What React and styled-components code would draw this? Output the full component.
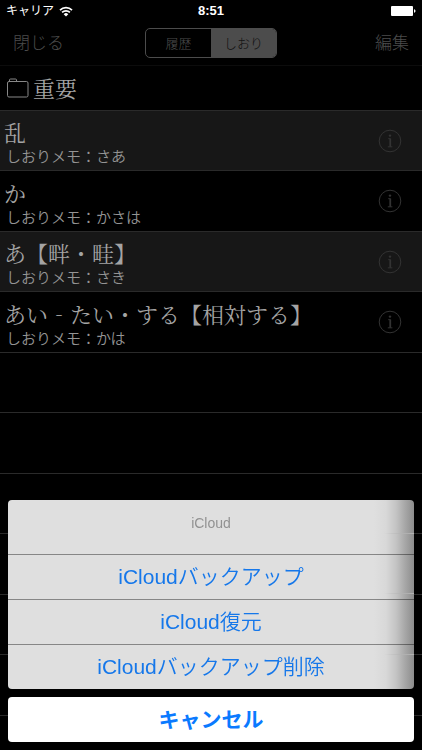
import React, {useState} from 'react'
import styled, {createGlobalStyle} from 'styled-components'

const bookmarks = [
  {title: '乱', memo: 'さあ'},
  {title: 'か', memo: 'かさは'},
  {title: 'あ【畔・畦】', memo: 'さき'},
  {title: 'あい‐たい・する【相対する】', memo: 'かは'},
]
const EMPTY_ROWS = 7

const GlobalStyle = createGlobalStyle`
  * {
    box-sizing: border-box;
  }
  body {
    margin: 0;
    background: #000;
    font-family: 'Liberation Sans', 'Noto Sans CJK JP', sans-serif;
  }
  button {
    margin: 0;
    padding: 0;
    border: 0;
    background: none;
    color: inherit;
    font: inherit;
    cursor: pointer;
  }
`

const Screen = styled.div`
  height: 100vh;
  overflow: hidden;
  background: #000;
`

const StatusBar = styled.div`
  display: grid;
  grid-template-columns: 1fr auto 1fr;
  align-items: center;
  height: 22px;
  padding: 0 6px;
  color: #fff;
  font-size: 12px;
  line-height: 22px;
`
const Carrier = styled.div`
  display: flex;
  align-items: center;
  gap: 5px;
`
const Clock = styled.time`
  font-size: 13px;
  font-weight: bold;
`
const Battery = styled.svg`
  justify-self: end;
`

const NavBar = styled.nav`
  display: grid;
  grid-template-columns: 1fr auto 1fr;
  align-items: center;
  height: 44px;
  padding: 0 13px;
  border-bottom: 1px solid #0c0c0c;
  color: #4c4c4c;
`
const NavButton = styled.button`
  justify-self: ${props => (props.$right ? 'end' : 'start')};
  font-size: 17px;
  font-weight: 300;
  line-height: 24px;
`
const Segments = styled.div`
  display: flex;
  overflow: hidden;
  margin-bottom: 2px;
  border: 1px solid #4c4c4c;
  border-radius: 5px;
`
const Segment = styled.button`
  width: 65px;
  height: 28px;
  font-size: 13px;
  font-weight: 300;
  background: ${props => (props.$active ? '#4c4c4c' : 'transparent')};
  color: ${props => (props.$active ? '#111' : '#4c4c4c')};
`

const Heading = styled.h1`
  display: flex;
  align-items: center;
  gap: 4px;
  height: 45px;
  margin: 0;
  padding: 0 7px;
  border-bottom: 1px solid #2a2a2a;
  color: #a4a4a4;
  font-family: 'Noto Serif CJK JP', 'Noto Sans CJK JP', serif;
  font-size: 22px;
  font-weight: 400;
  line-height: 30px;
`

const List = styled.ul`
  margin: 0;
  padding: 0;
  list-style: none;
`
const Row = styled.li`
  display: flex;
  align-items: center;
  justify-content: space-between;
  height: 60px;
  padding: 0 20px 0 4px;
  border-bottom: 1px solid #2a2a2a;
  background: ${props => (props.$shaded ? '#171717' : '#000')};

  &:nth-child(even) {
    height: 61px;
  }
`
const Entry = styled.div`
  padding-top: 3px;
`
const Title = styled.div`
  color: #a4a4a4;
  font-family: 'Noto Serif CJK JP', 'Noto Sans CJK JP', serif;
  font-size: 22px;
  font-weight: 400;
  line-height: 28px;
  white-space: nowrap;
`
const Memo = styled.div`
  padding-left: 2px;
  color: #949494;
  font-family: 'Noto Sans CJK JP', sans-serif;
  font-size: 15px;
  font-weight: 350;
  line-height: 20px;
`
const InfoButton = styled.button`
  display: flex;
  color: #333;
`

const ActionSheet = styled.div`
  position: fixed;
  right: 8px;
  bottom: 8px;
  left: 8px;
  display: flex;
  flex-direction: column;
  gap: 8px;
`
const Actions = styled.div`
  position: relative;
  overflow: hidden;
  border-radius: 4px;
  background: linear-gradient(
    to left,
    #8c8c8c 0,
    #a4a4a4 8px,
    #c4c4c4 18px,
    #d8d8d8 28px,
    #dfdfdf 40px
  );

  /* list lines showing through the translucent edge */
  &::after {
    content: '';
    position: absolute;
    top: 33px;
    right: 0;
    width: 30px;
    height: 122px;
    background:
      linear-gradient(to left, #b4b4b4, transparent) 0 0 / 100% 1px no-repeat,
      linear-gradient(to left, #b4b4b4, transparent) 0 60px / 100% 1px no-repeat,
      linear-gradient(to left, #b4b4b4, transparent) 0 121px / 100% 1px no-repeat;
    pointer-events: none;
  }
`
const SheetTitle = styled.h2`
  margin: 0;
  height: 54px;
  padding-top: 13px;
  color: #929292;
  font-size: 14px;
  font-weight: normal;
  line-height: 20px;
  text-align: center;
`
const Action = styled.button`
  display: block;
  width: 100%;
  height: 45px;
  border-top: 1px solid rgba(0, 0, 0, 0.4);
  color: #1577ea;
  font-size: 21px;
  font-weight: 350;
  line-height: 44px;
  text-align: center;
`
const Cancel = styled.button`
  height: 45px;
  border-radius: 4px;
  background: #fff;
  color: #0a7aff;
  font-size: 21px;
  font-weight: bold;
  line-height: 44px;
`

const WifiIcon = () => (
  <svg width="14" height="11" viewBox="0 0 14 11" fill="none" stroke="#fff">
    <path d="M1 4.1a8.6 8.6 0 0 1 12 0" strokeWidth="1.7" />
    <path d="M3.1 6.4a5.6 5.6 0 0 1 7.8 0" strokeWidth="1.7" />
    <path d="M7 10.6 4.7 8.2a3.3 3.3 0 0 1 4.6 0z" fill="#fff" stroke="none" />
  </svg>
)

const BatteryIcon = () => (
  <Battery width="25" height="10" viewBox="0 0 25 10" fill="#fff">
    <rect width="22" height="10" rx="1" />
    <path d="M23 3.3c2 .4 2 3 0 3.4z" />
  </Battery>
)

const FolderIcon = () => (
  <svg width="22" height="20" viewBox="0 0 22 20" fill="none" stroke="#888">
    <path d="M2 3.5h17.5q1.5 0 1.5 1.5v12.5q0 1.5-1.5 1.5h-17.5q-1.5 0-1.5-1.5v-12.5q0-1.5 1.5-1.5zM2.5 3.5v-1.5q0-1 1-1h5q1 0 1 1v1.5" />
  </svg>
)

const InfoIcon = () => (
  <svg width="24" height="24" viewBox="0 0 24 24" fill="none" stroke="currentColor">
    <circle cx="12" cy="12" r="10.8" />
    <circle cx="12" cy="6.6" r="1.2" fill="currentColor" stroke="none" />
    <path d="M10.2 9.7h2.1v8M9.8 17.8h4.6" strokeWidth="1" />
    <path d="M12.3 9.5v8.3" strokeWidth="1.7" />
  </svg>
)

export default function App() {
  const [tab, setTab] = useState('しおり')
  const [sheetOpen, setSheetOpen] = useState(true)
  const closeSheet = () => setSheetOpen(false)

  return (
    <Screen>
      <GlobalStyle />
      <StatusBar>
        <Carrier>
          キャリア
          <WifiIcon />
        </Carrier>
        <Clock>8:51</Clock>
        <BatteryIcon />
      </StatusBar>
      <NavBar>
        <NavButton>閉じる</NavButton>
        <Segments>
          {['履歴', 'しおり'].map(name => (
            <Segment key={name} $active={name === tab} onClick={() => setTab(name)}>
              {name}
            </Segment>
          ))}
        </Segments>
        <NavButton $right>編集</NavButton>
      </NavBar>
      <Heading>
        <FolderIcon />
        重要
      </Heading>
      <List>
        {bookmarks.map((bookmark, index) => (
          <Row key={bookmark.title} $shaded={index % 2 === 0}>
            <Entry>
              <Title>{bookmark.title}</Title>
              <Memo>しおりメモ：{bookmark.memo}</Memo>
            </Entry>
            <InfoButton aria-label="情報">
              <InfoIcon />
            </InfoButton>
          </Row>
        ))}
        {Array.from({length: EMPTY_ROWS}, (_, index) => (
          <Row key={index} aria-hidden="true" />
        ))}
      </List>
      {sheetOpen ? (
        <ActionSheet>
          <Actions>
            <SheetTitle>iCloud</SheetTitle>
            <Action onClick={closeSheet}>iCloudバックアップ</Action>
            <Action onClick={closeSheet}>iCloud復元</Action>
            <Action onClick={closeSheet}>iCloudバックアップ削除</Action>
          </Actions>
          <Cancel onClick={closeSheet}>キャンセル</Cancel>
        </ActionSheet>
      ) : null}
    </Screen>
  )
}
